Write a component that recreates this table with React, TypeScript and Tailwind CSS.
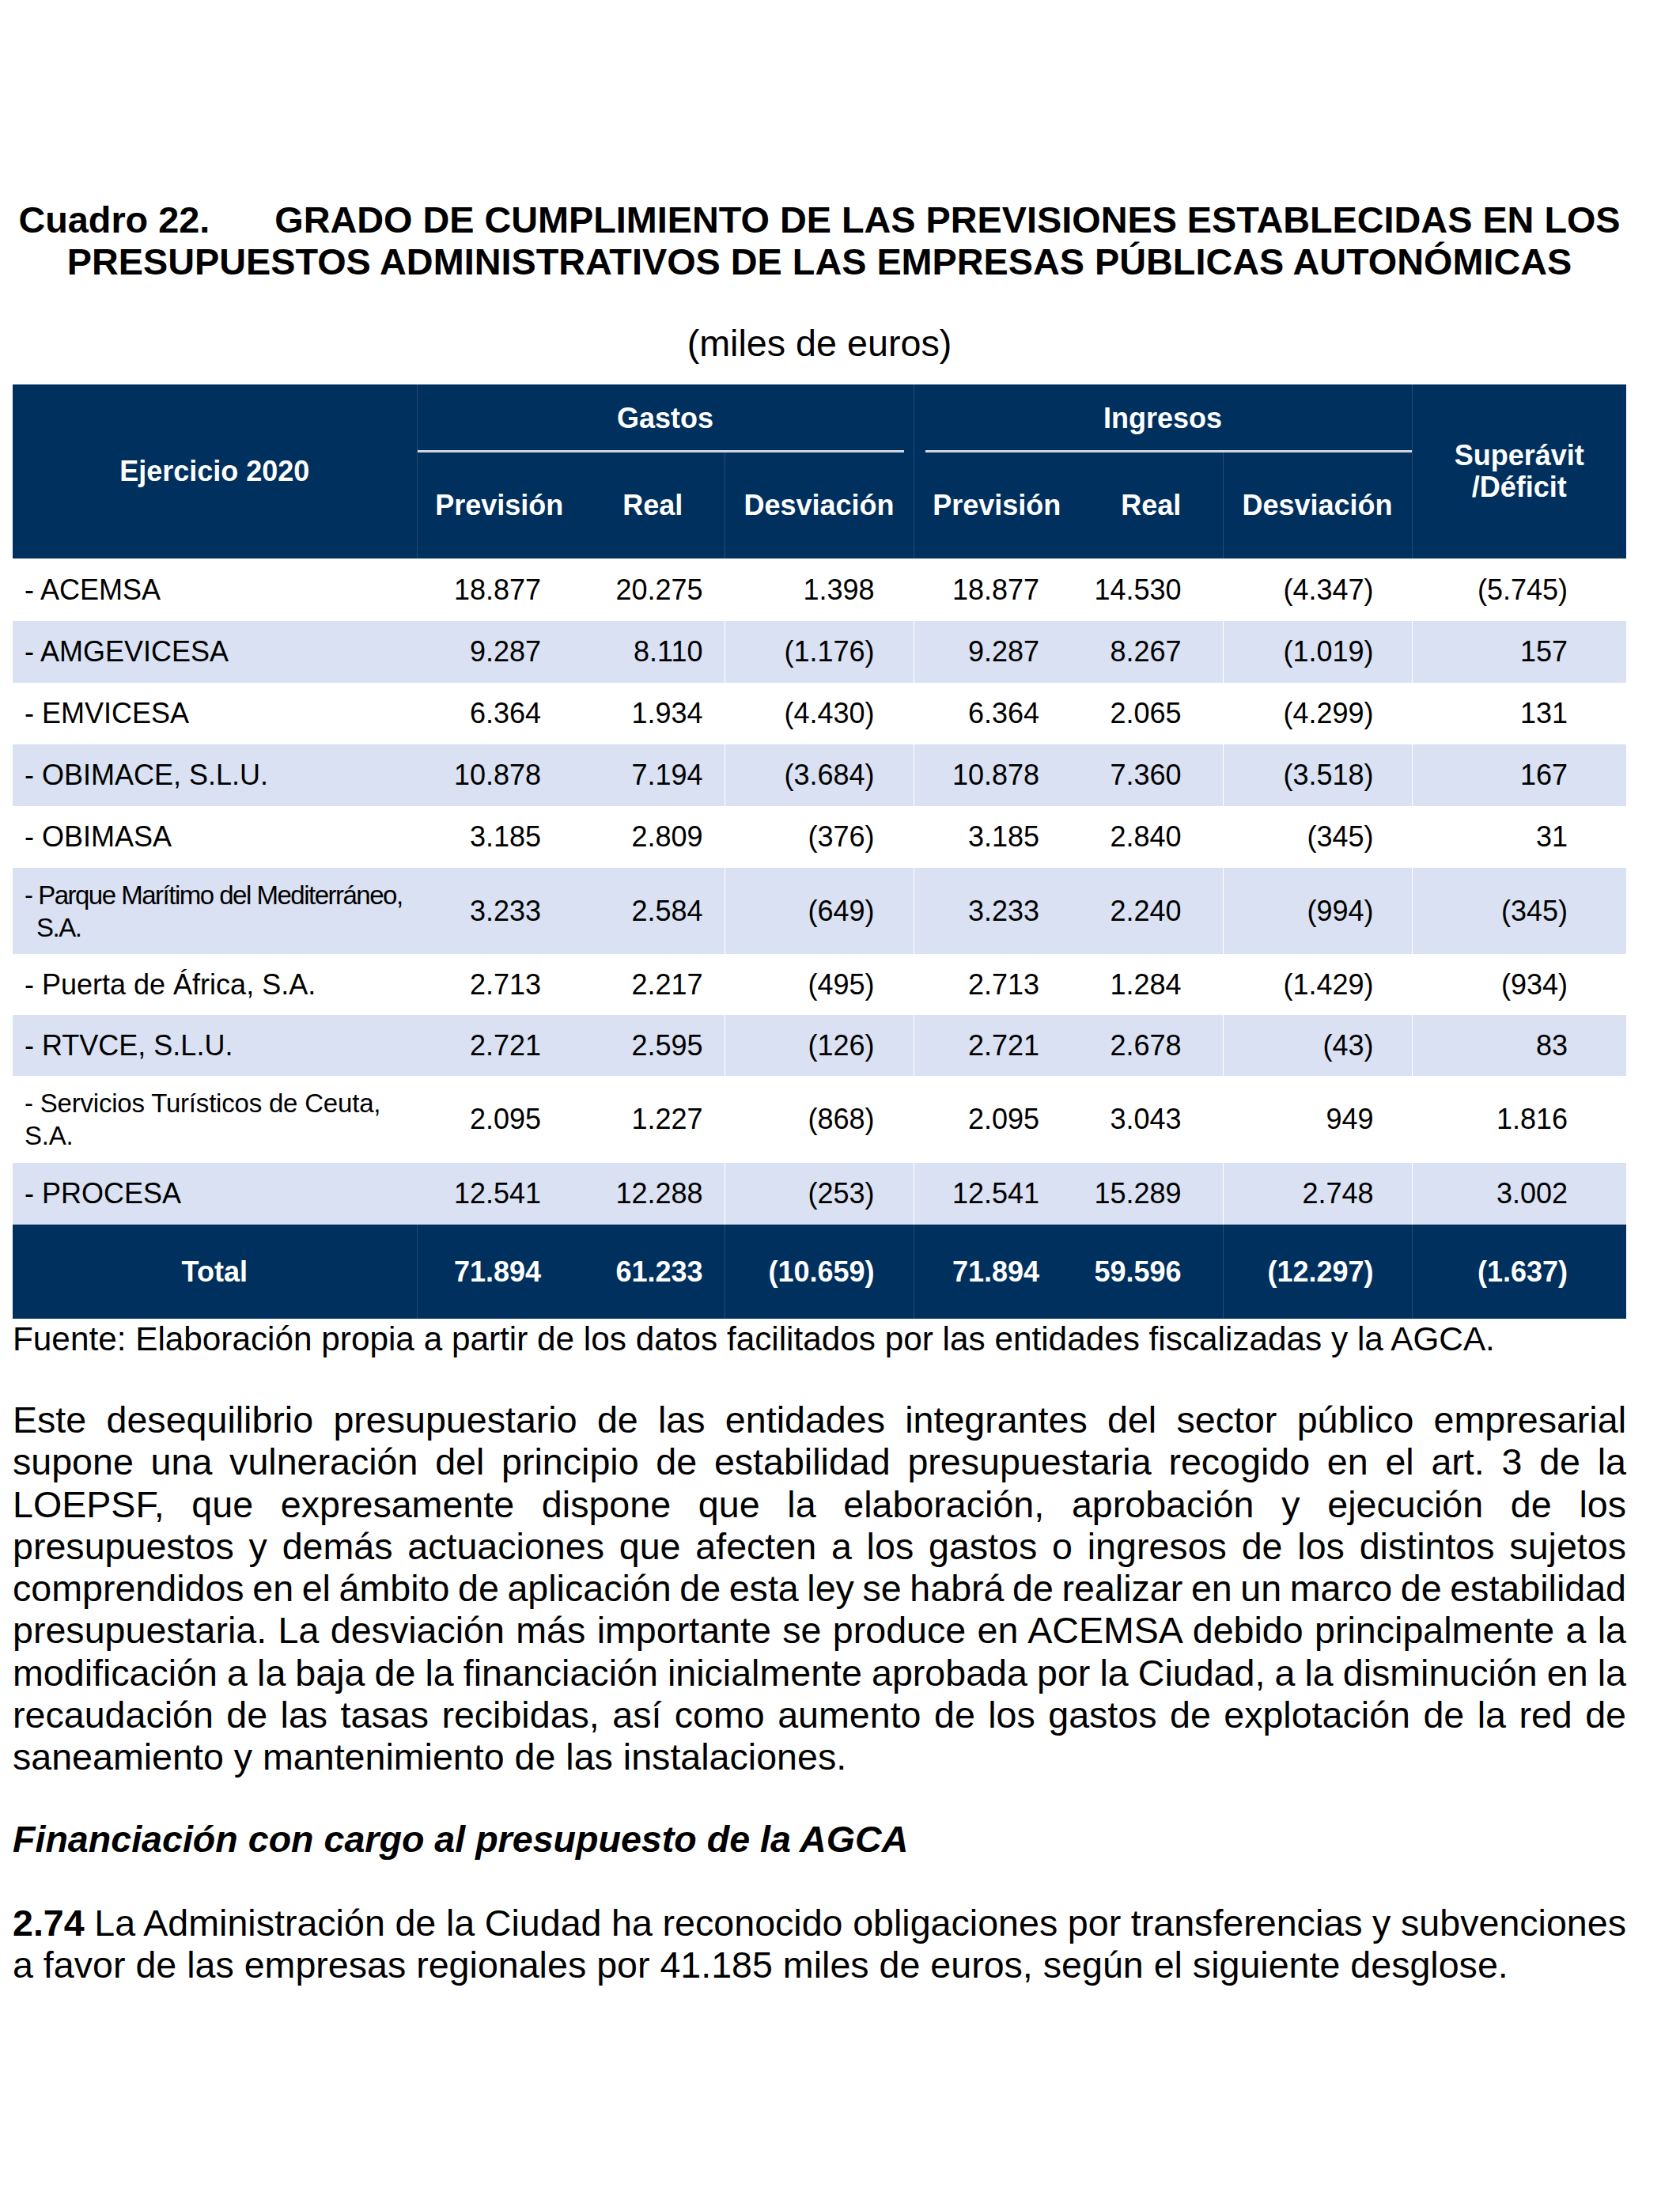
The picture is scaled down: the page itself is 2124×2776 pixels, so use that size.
import React from "react";

type Row = {
  name: React.ReactNode;
  v: string[];
  blue: boolean;
  h: string;
};

const rows: Row[] = [
  { name: "- ACEMSA", v: ["18.877", "20.275", "1.398", "18.877", "14.530", "(4.347)", "(5.745)"], blue: false, h: "h-[79px]" },
  { name: "- AMGEVICESA", v: ["9.287", "8.110", "(1.176)", "9.287", "8.267", "(1.019)", "157"], blue: true, h: "h-[78px]" },
  { name: "- EMVICESA", v: ["6.364", "1.934", "(4.430)", "6.364", "2.065", "(4.299)", "131"], blue: false, h: "h-[78px]" },
  { name: "- OBIMACE, S.L.U.", v: ["10.878", "7.194", "(3.684)", "10.878", "7.360", "(3.518)", "167"], blue: true, h: "h-[78px]" },
  { name: "- OBIMASA", v: ["3.185", "2.809", "(376)", "3.185", "2.840", "(345)", "31"], blue: false, h: "h-[78px]" },
  {
    name: (
      <div className="text-[33px] leading-[41px] tracking-[-1.5px]">
        <div>- Parque Marítimo del Mediterráneo,</div>
        <div className="pl-[15px]">S.A.</div>
      </div>
    ),
    v: ["3.233", "2.584", "(649)", "3.233", "2.240", "(994)", "(345)"],
    blue: true,
    h: "h-[109px]",
  },
  { name: "- Puerta de África, S.A.", v: ["2.713", "2.217", "(495)", "2.713", "1.284", "(1.429)", "(934)"], blue: false, h: "h-[77px]" },
  { name: "- RTVCE, S.L.U.", v: ["2.721", "2.595", "(126)", "2.721", "2.678", "(43)", "83"], blue: true, h: "h-[77px]" },
  {
    name: (
      <div className="text-[33px] leading-[41px] tracking-[-0.2px]">
        <div>- Servicios Turísticos de Ceuta,</div>
        <div>S.A.</div>
      </div>
    ),
    v: ["2.095", "1.227", "(868)", "2.095", "3.043", "949", "1.816"],
    blue: false,
    h: "h-[110px]",
  },
  { name: "- PROCESA", v: ["12.541", "12.288", "(253)", "12.541", "15.289", "2.748", "3.002"], blue: true, h: "h-[78px]" },
];

const pr = ["pr-[51px]", "pr-[27px]", "pr-[49px]", "pr-[51px]", "pr-[52px]", "pr-[48px]", "pr-[74px]"];
const dataBorder = ["", "", "border-l border-white", "border-l border-white", "", "border-l border-white", "border-l border-white"];
const totalBorder = [
  "border-l border-[#274a74]",
  "",
  "border-l border-[#274a74]",
  "border-l border-[#274a74]",
  "",
  "border-l border-[#274a74]",
  "border-l border-[#274a74]",
];

const totals = ["71.894", "61.233", "(10.659)", "71.894", "59.596", "(12.297)", "(1.637)"];

const paraLines = [
  "Este desequilibrio presupuestario de las entidades integrantes del sector público empresarial",
  "supone una vulneración del principio de estabilidad presupuestaria recogido en el art. 3 de la",
  "LOEPSF, que expresamente dispone que la elaboración, aprobación y ejecución de los",
  "presupuestos y demás actuaciones que afecten a los gastos o ingresos de los distintos sujetos",
  "comprendidos en el ámbito de aplicación de esta ley se habrá de realizar en un marco de estabilidad",
  "presupuestaria. La desviación más importante se produce en ACEMSA debido principalmente a la",
  "modificación a la baja de la financiación inicialmente aprobada por la Ciudad, a la disminución en la",
  "recaudación de las tasas recibidas, así como aumento de los gastos de explotación de la red de",
];

export default function App() {
  return (
    <div className="w-[2124px] h-[2776px] bg-white text-black font-['Liberation_Sans',Arial,sans-serif] px-[16px] pt-[252px]">
      {/* Title */}
      <div className="w-[2040px] text-center font-bold text-[46.8px] leading-[53px]">
        <div className="flex justify-center">
          <span>Cuadro 22.</span>
          <span className="ml-[82px]">GRADO DE CUMPLIMIENTO DE LAS PREVISIONES ESTABLECIDAS EN LOS</span>
        </div>
        <div>PRESUPUESTOS ADMINISTRATIVOS DE LAS EMPRESAS PÚBLICAS AUTONÓMICAS</div>
      </div>

      <div className="w-[2040px] text-center text-[46.7px] leading-[53px] mt-[50px]">(miles de euros)</div>

      {/* Table */}
      <table className="table-fixed border-collapse w-[2040px] mt-[25px] text-[36px]">
        <colgroup>
          <col className="w-[511px]" />
          <col className="w-[208px]" />
          <col className="w-[181px]" />
          <col className="w-[239px]" />
          <col className="w-[210px]" />
          <col className="w-[181px]" />
          <col className="w-[239px]" />
          <col className="w-[271px]" />
        </colgroup>
        <thead>
          <tr className="h-[86px] bg-[#00305e] text-white font-bold">
            <th rowSpan={2} className="p-0 text-center align-middle font-bold">
              Ejercicio 2020
            </th>
            <th colSpan={3} className="relative p-0 text-center align-middle font-bold border-l border-[#274a74]">
              Gastos
              <span className="absolute bottom-0 left-0 right-[12px] h-[3px] bg-[#d3d7de]" />
            </th>
            <th colSpan={3} className="relative p-0 text-center align-middle font-bold border-l border-[#274a74]">
              Ingresos
              <span className="absolute bottom-0 left-[14px] right-0 h-[3px] bg-[#d3d7de]" />
            </th>
            <th rowSpan={2} className="p-0 text-center align-middle font-bold leading-[40px] border-l border-[#274a74]">
              <div>Superávit</div>
              <div>/Déficit</div>
            </th>
          </tr>
          <tr className="h-[134px] bg-[#00305e] text-white">
            <th className="p-0 text-center align-middle font-bold border-l border-[#274a74]">Previsión</th>
            <th className="p-0 text-center align-middle font-bold">Real</th>
            <th className="p-0 text-center align-middle font-bold border-l border-[#274a74]">Desviación</th>
            <th className="p-0 text-center align-middle font-bold border-l border-[#274a74]">Previsión</th>
            <th className="p-0 text-center align-middle font-bold">Real</th>
            <th className="p-0 text-center align-middle font-bold border-l border-[#274a74]">Desviación</th>
          </tr>
        </thead>
        <tbody>
          {rows.map((r, i) => (
            <tr key={i} className={`${r.h} ${r.blue ? "bg-[#d9e1f2]" : "bg-white"}`}>
              <td className="p-0 pl-[15px] align-middle text-left">{r.name}</td>
              {r.v.map((val, j) => (
                <td key={j} className={`p-0 align-middle text-right ${pr[j]} ${dataBorder[j]}`}>
                  {val}
                </td>
              ))}
            </tr>
          ))}
          <tr className="h-[119px] bg-[#00305e] text-white font-bold">
            <td className="p-0 align-middle text-center">Total</td>
            {totals.map((val, j) => (
              <td key={j} className={`p-0 align-middle text-right ${pr[j]} ${totalBorder[j]}`}>
                {val}
              </td>
            ))}
          </tr>
        </tbody>
      </table>

      <div className="w-[2040px] text-[42.3px] leading-[52px]">
        Fuente: Elaboración propia a partir de los datos facilitados por las entidades fiscalizadas y la AGCA.
      </div>

      <div className="w-[2040px] text-[46.6px] leading-[53.3px] mt-[50px]">
        {paraLines.map((l, i) => (
          <div key={i} className="whitespace-nowrap text-justify [text-align-last:justify] [word-spacing:-3px]">
            {l}
          </div>
        ))}
        <div className="whitespace-nowrap">saneamiento y mantenimiento de las instalaciones.</div>
      </div>

      <h2 className="w-[2040px] text-[46.6px] leading-[53px] font-bold italic mt-[50px]">
        Financiación con cargo al presupuesto de la AGCA
      </h2>

      <div className="w-[2040px] text-[46.6px] leading-[53px] mt-[53px]">
        <div className="whitespace-nowrap text-justify [text-align-last:justify] [word-spacing:-3px]">
          <span className="font-bold">2.74</span> La Administración de la Ciudad ha reconocido obligaciones por
          transferencias y subvenciones
        </div>
        <div className="whitespace-nowrap">
          a favor de las empresas regionales por 41.185 miles de euros, según el siguiente desglose.
        </div>
      </div>
    </div>
  );
}
